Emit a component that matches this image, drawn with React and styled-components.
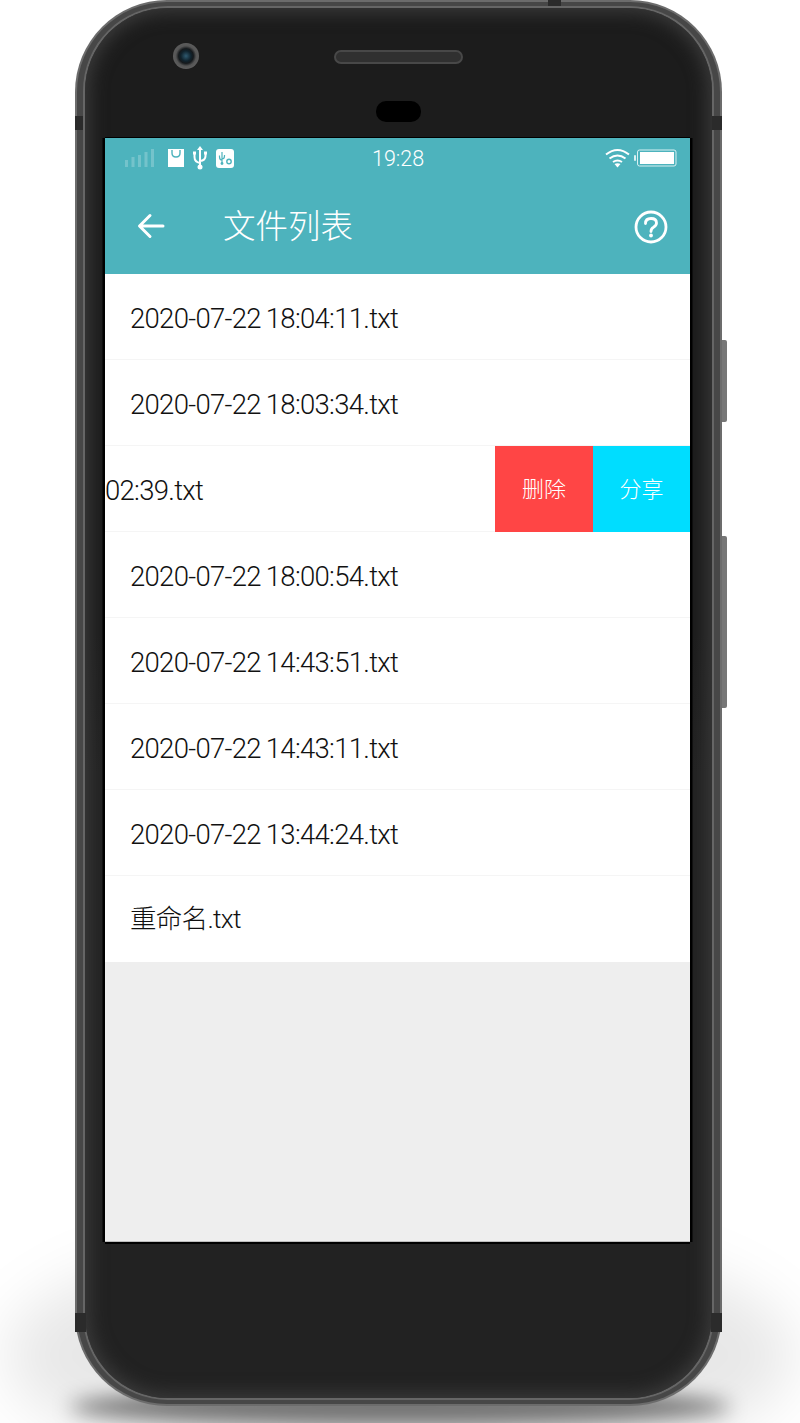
import React from "react";
import styled, { createGlobalStyle } from "styled-components";

const Global = createGlobalStyle`
  html, body { margin: 0; padding: 0; background: #fff; }
  body { font-family: Roboto, "Noto Sans CJK SC", sans-serif; }
`;

const Stage = styled.div`
  position: relative;
  width: 800px;
  height: 1423px;
  overflow: hidden;
  padding-left: 75px;
  box-sizing: border-box;
`;

const FloorShadow = styled.div`
  position: absolute;
  left: ${p => p.$left}px;
  top: ${p => p.$top}px;
  width: ${p => p.$width}px;
  height: ${p => p.$height}px;
  border-radius: 50%;
  background: ${p => p.$color};
  filter: blur(${p => p.$blur}px);
`;

const Phone = styled.div`
  position: relative;
  width: 647px;
  height: 1406px;
  box-sizing: border-box;
  padding: 2px;
  border-radius: 92px;
  background: #6c6c6c;
`;

const Band = styled.div`
  height: 100%;
  box-sizing: border-box;
  padding: 4px 6px;
  border-radius: 90px;
  background: #474747;
`;

const Rim = styled.div`
  height: 100%;
  box-sizing: border-box;
  padding: 2px;
  border-radius: 85px;
  background: #666;
`;

const Face = styled.div`
  height: 100%;
  box-sizing: border-box;
  padding: 130px 0 0 20px;
  border-radius: 83px;
  background: linear-gradient(180deg, #1c1c1c 0, #1c1c1c 45%, #222 55%, #222 100%);
  box-shadow: inset 0 0 18px 4px #3c3c3c;
  display: flex;
  flex-direction: column;
`;

const Screen = styled.div`
  width: 585px;
  height: 1104px;
  flex: none;
  box-sizing: border-box;
  background: #eee;
  border-bottom: 1px solid #bdbdbd;
  box-shadow: -2.5px 0 0 #000, 2.5px 0 0 #000, 0 2px 0 #000, 0 -1px 0 #000;
  display: flex;
  flex-direction: column;
  overflow: hidden;
`;

const Camera = styled.div`
  position: absolute;
  left: 98px;
  top: 43px;
  width: 26px;
  height: 26px;
  border-radius: 50%;
  background: radial-gradient(circle at 50% 50%, #2f5a70 0, #10222c 28%, #15191c 40%, #555 55%, #616161 78%, #2a2a2a 100%);
`;

const Speaker = styled.div`
  position: absolute;
  left: 259px;
  top: 50px;
  width: 129px;
  height: 14px;
  box-sizing: border-box;
  border-radius: 7px;
  background: #303030;
  border: 2px solid #484848;
`;

const Sensor = styled.div`
  position: absolute;
  left: 301px;
  top: 101px;
  width: 45px;
  height: 21px;
  border-radius: 10px;
  background: #000;
`;

const Notch = styled.div`
  position: absolute;
  background: #2b2b2b;
  left: ${p => p.$left}px;
  top: ${p => p.$top}px;
  width: ${p => p.$width}px;
  height: ${p => p.$height}px;
`;

const SideKey = styled.div`
  position: absolute;
  left: 647px;
  top: ${p => p.$top}px;
  width: 5px;
  height: ${p => p.$height}px;
  background: #777;
  border-radius: 0 2px 2px 0;
`;

const StatusBar = styled.div`
  height: 42px;
  flex: none;
  box-sizing: border-box;
  background: #4db3bd;
  display: flex;
  align-items: center;
  position: relative;
  padding: 0 12px 2px 20px;
  color: #fff;
`;

const StatusLeft = styled.div`
  display: flex;
  align-items: center;
  gap: 9px;
`;

const StatusIcon = styled.span`
  display: flex;
  margin-left: ${p => p.$gap || 0}px;
`;

const Clock = styled.div`
  position: absolute;
  left: 267px;
  top: 9px;
  font-size: 21.5px;
  font-weight: 300;
  line-height: 24px;
`;

const StatusRight = styled.div`
  margin-left: auto;
  display: flex;
  align-items: center;
  gap: 4px;
`;

const Header = styled.header`
  height: 94px;
  flex: none;
  background: #4db3bd;
  display: flex;
  align-items: center;
  padding: 0 22px 2px 32px;
  box-sizing: border-box;
  color: #fff;
`;

const Title = styled.h1`
  margin: 0 0 4px 58px;
  font-size: 32.5px;
  font-weight: 300;
  line-height: 40px;
  font-family: "Noto Sans CJK SC", sans-serif;
  flex: 1;
`;

const HelpButton = styled.span`
  display: flex;
  margin-top: 2px;
`;

const List = styled.div`
  background: #fff;
  flex: none;
`;

const Row = styled.div`
  height: 86px;
  box-sizing: border-box;
  box-shadow: ${p => (p.$last ? "none" : "inset 0 -1px 0 #f5f5f5")};
  display: flex;
  overflow: hidden;
  color: #111;
`;

const Name = styled.div`
  flex: none;
  margin-left: ${p => (p.$swiped ? -170 : 25)}px;
  line-height: ${p => (p.$last ? 86 : 90)}px;
  white-space: nowrap;
  font-size: ${p => (p.$last ? 26.5 : 27.5)}px;
  font-weight: 300;
  letter-spacing: -0.7px;
  word-spacing: -1px;
  font-family: Roboto, "Noto Sans CJK SC", sans-serif;
`;

const Actions = styled.div`
  margin-left: auto;
  display: flex;
  height: 86px;
  flex: none;
`;

const Action = styled.div`
  width: ${p => p.$width}px;
  background: ${p => p.$bg};
  color: #fff;
  font-size: 22px;
  font-family: "Noto Sans CJK SC", sans-serif;
  font-weight: 300;
  padding-bottom: 4px;
  box-sizing: border-box;
  display: flex;
  align-items: center;
  justify-content: center;
`;

const Signal = () => (
  <svg width="30" height="20" viewBox="0 0 30 20" fill="#fff" opacity=".22">
    <rect x="0" y="12" width="3" height="7" />
    <rect x="6.5" y="9" width="3" height="10" />
    <rect x="13" y="7" width="3" height="12" />
    <rect x="19.5" y="4" width="3" height="15" />
    <rect x="26" y="1" width="3" height="18" />
  </svg>
);

const Bag = () => (
  <svg width="16" height="18" viewBox="0 0 16 18">
    <path d="M0 0h16v18H0z" fill="#fff" />
    <path d="M4 1v3q0 4 4 4t4-4V1" fill="none" stroke="#4db3bd" strokeWidth="1.4" />
  </svg>
);

const Usb = () => (
  <svg width="14" height="24" viewBox="0 0 14 24" fill="none" stroke="#fff" strokeWidth="2">
    <path d="M7 3v18M7 17Q1.500 16 1.500 11V8M7 15q5.500-.5 5.500-5V8" />
    <path d="M7 0l3 4H4z" fill="#fff" stroke="none" />
    <circle cx="7" cy="21" r="2.500" fill="#fff" stroke="none" />
    <rect x="0" y="5.500" width="3" height="3" fill="#fff" stroke="none" />
    <rect x="11" y="5.500" width="3" height="3" fill="#fff" stroke="none" />
  </svg>
);

const UsbBadge = () => (
  <svg width="18" height="19" viewBox="0 0 18 19">
    <rect width="18" height="19" rx="3" fill="#fff" />
    <path d="M6 3v11M6 11q-2.500 0-2.500-3V6.500M6 10q2.500 0 2.500-3V6" fill="none" stroke="#4db3bd" strokeWidth="1.200" />
    <circle cx="6" cy="14.500" r="1.400" fill="#4db3bd" />
    <circle cx="13" cy="12.500" r="2.200" fill="none" stroke="#4db3bd" strokeWidth="1.400" />
  </svg>
);

const Wifi = () => (
  <svg width="25" height="20" viewBox="0 0 25 20" fill="none" stroke="#fff" strokeWidth="2">
    <path d="M1 6.500q11.500-9 23 0" />
    <path d="M4.500 10.500q8-6 16 0" />
    <path d="M8 14q4.500-3 9 0" />
    <path d="M9.500 16l3 3.500 3-3.500q-3-1.500-6 0z" fill="#fff" stroke="none" />
  </svg>
);

const Battery = () => (
  <svg width="44" height="18" viewBox="0 0 44 18">
    <rect x="0" y="6" width="2" height="6" rx="1" fill="#fff" opacity=".8" />
    <rect x="3.500" y="1" width="38.500" height="16" rx="2" fill="none" stroke="#d7f0f2" strokeWidth="1" />
    <rect x="6" y="3" width="34" height="12" fill="#fff" />
  </svg>
);

const Back = () => (
  <svg width="28" height="28" viewBox="0 0 28 28" fill="none" stroke="#fff" strokeWidth="3" strokeLinecap="round" strokeLinejoin="round">
    <path d="M26 14H3M13 3.500L2.500 14 13 24.500" />
  </svg>
);

const Help = () => (
  <svg width="34" height="34" viewBox="0 0 34 34" fill="none" stroke="#fff" strokeWidth="2.800">
    <circle cx="17" cy="17" r="15" />
    <path d="M11.500 13.500q0-5 5.500-5t5.500 4.500q0 2.500-3 4.200-2.500 1.300-2.500 4.300" strokeLinecap="round" />
    <circle cx="17" cy="25.500" r="1.900" fill="#fff" stroke="none" />
  </svg>
);

const files = [
  { name: "2020-07-22 18:04:11.txt" },
  { name: "2020-07-22 18:03:34.txt" },
  { name: "2020-07-22 18:02:39.txt", swiped: true },
  { name: "2020-07-22 18:00:54.txt" },
  { name: "2020-07-22 14:43:51.txt" },
  { name: "2020-07-22 14:43:11.txt" },
  { name: "2020-07-22 13:44:24.txt" },
  { name: "重命名.txt", last: true },
];

export default function App() {
  return (
    <Stage>
      <Global />
      <FloorShadow $left={5} $top={1230} $width={790} $height={250} $color="rgba(0,0,0,.09)" $blur={28} />
      <FloorShadow $left={70} $top={1388} $width={660} $height={38} $color="rgba(0,0,0,.5)" $blur={10} />
      <Phone>
        <SideKey $top={340} $height={82} />
        <SideKey $top={536} $height={172} />
        <Band>
          <Rim>
            <Face>
              <Screen>
                <StatusBar>
                  <StatusLeft>
                    <Signal />
                    <StatusIcon $gap={4}><Bag /></StatusIcon>
                    <StatusIcon><Usb /></StatusIcon>
                    <StatusIcon><UsbBadge /></StatusIcon>
                  </StatusLeft>
                  <Clock>19:28</Clock>
                  <StatusRight>
                    <Wifi />
                    <Battery />
                  </StatusRight>
                </StatusBar>
                <Header>
                  <Back />
                  <Title>文件列表</Title>
                  <HelpButton><Help /></HelpButton>
                </Header>
                <List>
                  {files.map(f => (
                    <Row key={f.name} $last={f.last}>
                      <Name $swiped={f.swiped} $last={f.last}>{f.name}</Name>
                      {f.swiped && (
                        <Actions>
                          <Action $width={98} $bg="#ff4545">删除</Action>
                          <Action $width={97} $bg="#00ddff">分享</Action>
                        </Actions>
                      )}
                    </Row>
                  ))}
                </List>
              </Screen>
            </Face>
          </Rim>
        </Band>
        <Notch $left={473} $top={0} $width={13} $height={6} />
        <Notch $left={0} $top={116} $width={8} $height={14} />
        <Notch $left={637} $top={116} $width={10} $height={14} />
        <Notch $left={0} $top={1313} $width={11} $height={19} />
        <Notch $left={636} $top={1313} $width={11} $height={19} />
        <Camera />
        <Speaker />
        <Sensor />
      </Phone>
    </Stage>
  );
}
